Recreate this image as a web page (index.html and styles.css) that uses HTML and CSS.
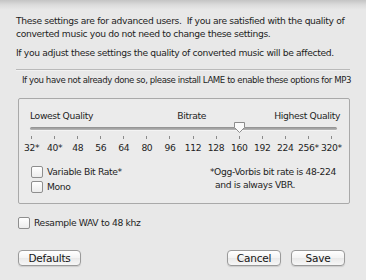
FILE: index.html
```html
<!DOCTYPE html>
<html lang="en">
<head>
    <meta charset="UTF-8">
    <meta name="viewport" content="width=device-width, initial-scale=1.0">
    <title>Advanced Settings</title>
    <link rel="stylesheet" href="styles.css">
</head>
<body>
    <div class="sheet">
        <p class="intro">These settings are for advanced users.&nbsp; If you are satisfied with the quality of<br>converted music you do not need to change these settings.</p>
        <p class="intro">If you adjust these settings the quality of converted music will be affected.</p>
        <div class="separator"></div>
        <p class="note">If you have not already done so, please install LAME to enable these options for MP3</p>

        <!-- Bitrate group -->
        <div class="group">
            <div class="scale-labels">
                <span>Lowest Quality</span>
                <span class="middle">Bitrate</span>
                <span>Highest Quality</span>
            </div>
            <div class="slider">
                <div class="track"></div>
                <svg class="thumb" width="13" height="13" viewBox="0 0 13 13">
                    <path d="M1.5 1.5 H11.5 V6.5 L6.5 11.5 L1.5 6.5 Z" fill="#fbfbfb" stroke="#8c8c8c" stroke-width="1"/>
                </svg>
            </div>
            <div class="scale-row ticks">
                <i></i><i></i><i></i><i></i><i></i><i></i><i></i><i></i><i></i><i></i><i></i><i></i><i></i><i></i>
            </div>
            <div class="scale-row values">
                <span>32*</span><span>40*</span><span>48</span><span>56</span><span>64</span><span>80</span><span>96</span>
                <span>112</span><span>128</span><span>160</span><span>192</span><span>224</span><span>256*</span><span>320*</span>
            </div>
            <div class="options">
                <div class="checks">
                    <label class="check"><span class="box"></span>Variable Bit Rate*</label>
                    <label class="check"><span class="box"></span>Mono</label>
                </div>
                <p class="ogg">*Ogg-Vorbis bit rate is 48-224<br>and is always VBR.</p>
            </div>
        </div>

        <label class="check resample"><span class="box"></span>Resample WAV to 48 khz</label>

        <div class="buttons">
            <button class="btn defaults">Defaults</button>
            <div class="right-buttons">
                <button class="btn">Cancel</button>
                <button class="btn">Save</button>
            </div>
        </div>
    </div>
</body>
</html>
```

FILE: styles.css
```css
body {
    margin: 0;
    height: 280px;
    overflow: hidden;
    font-family: "DejaVu Sans", Verdana, sans-serif;
    font-size: 9.2px;
    letter-spacing: -0.35px;
    color: #1e1e1e;
    background: linear-gradient(#c4c4c4 0, #dcdcdc 5px, #e8e8e8 10px, #e8e8e8 100%);
}
.sheet {
    padding: 14px 16px 0 16px;
}
p {
    margin: 0;
}
.intro {
    line-height: 13px;
    margin-bottom: 6px;
    white-space: nowrap;
}
.separator {
    margin-top: 10px;
    height: 1px;
    background-color: #b9b9b9;
    border-bottom: 1px solid #f2f2f2;
}
.note {
    margin: 4px 0 0 6px;
    font-size: 8.6px;
    letter-spacing: -0.42px;
    line-height: 11px;
    white-space: nowrap;
}
.group {
    margin: 12px 0 0 2px;
    padding: 10px 9px 10px 11px;
    border: 1px solid #a9a9a9;
    border-radius: 2px;
    background-color: #ebebeb;
}
.scale-labels {
    display: flex;
    justify-content: space-between;
    line-height: 13px;
}
.scale-labels .middle {
    margin-left: 16px;
}
.slider {
    position: relative;
    height: 12px;
    margin-right: 3px;
    display: flex;
    align-items: center;
}
.track {
    flex: 1;
    height: 3px;
    border-radius: 2px;
    background: linear-gradient(#8e8e8e, #b8b8b8);
    box-shadow: 0 1px 0 #f4f4f4;
}
.thumb {
    position: absolute;
    left: 203px;
    top: -1px;
}
.scale-row {
    display: grid;
    grid-template-columns: repeat(14, 1fr);
    width: 323px;
    margin-left: -10px;
}
.ticks {
    height: 3px;
    margin-top: 2px;
}
.ticks i {
    justify-self: center;
    width: 1px;
    height: 3px;
    background-color: #8a8a8a;
}
.values {
    margin-top: 3px;
    line-height: 12px;
    text-align: center;
    white-space: nowrap;
}
.options {
    display: flex;
    justify-content: space-between;
    margin-top: 12px;
}
.checks {
    display: flex;
    flex-direction: column;
    gap: 3px;
    padding-left: 1px;
}
.check {
    display: flex;
    align-items: center;
    gap: 4px;
    line-height: 12px;
}
.box {
    width: 10px;
    height: 10px;
    border: 1px solid #8e8e8e;
    border-radius: 2px;
    background: linear-gradient(#ffffff, #ececec);
}
.ogg {
    line-height: 13px;
    margin: -1px 4px 0 0;
    padding-left: 5px;
    text-indent: -5px;
    white-space: nowrap;
}
.resample {
    margin: 13px 0 0 2px;
}
.buttons {
    display: flex;
    justify-content: space-between;
    margin: 21px 5px 0 2px;
}
.right-buttons {
    display: flex;
    gap: 10px;
}
.btn {
    height: 16px;
    width: 54px;
    padding: 0;
    font-family: "DejaVu Sans", Verdana, sans-serif;
    font-size: 10.5px;
    letter-spacing: -0.2px;
    color: #151515;
    border: 1px solid #9a9a9a;
    border-radius: 4px;
    background: linear-gradient(#ffffff, #f3f3f3 50%, #e9e9e9 51%, #f7f7f7);
    box-shadow: 0 1px 1px rgba(0, 0, 0, 0.12);
}
.defaults {
    width: 63px;
}
```
